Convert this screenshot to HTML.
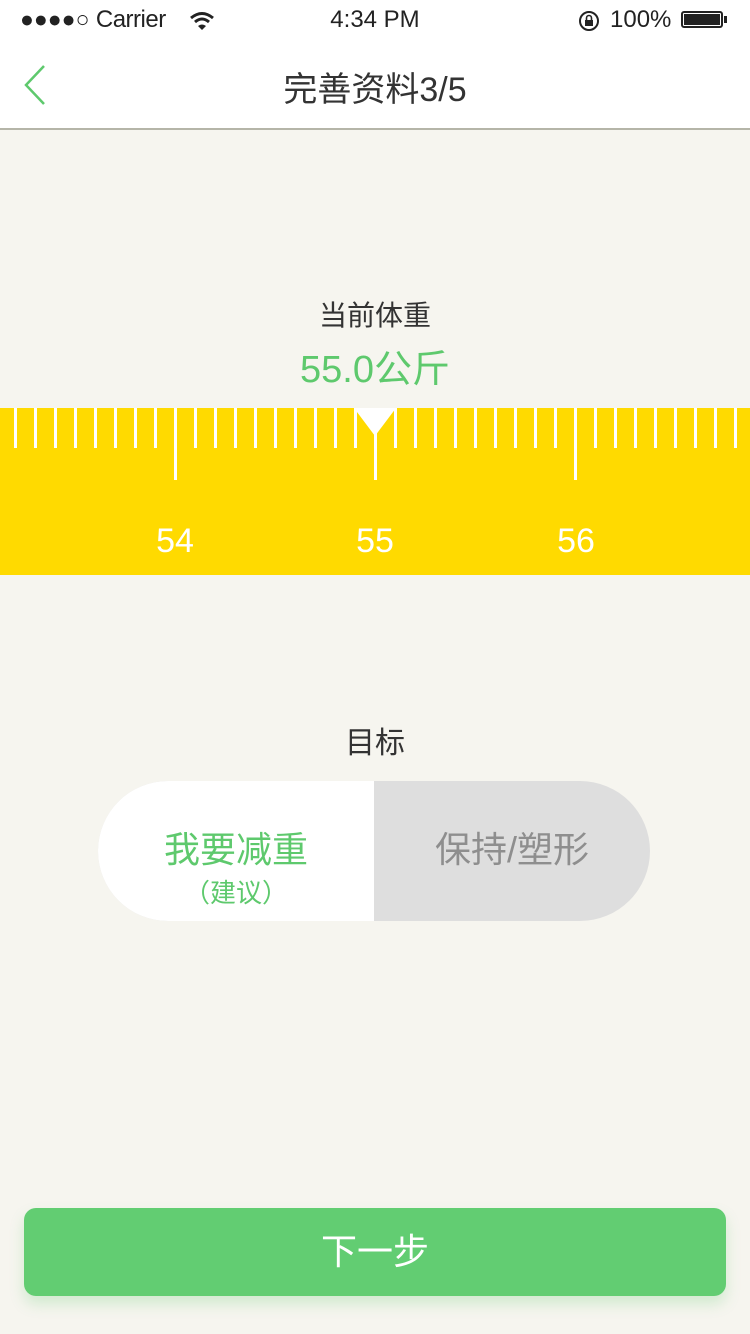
<!DOCTYPE html>
<html><head><meta charset="utf-8"><style>
body{margin:0;width:750px;height:1334px;background:#f6f5ef;font-family:"Liberation Sans","Noto Sans CJK SC",sans-serif;position:relative;overflow:hidden}
.hdr{position:absolute;left:0;top:0;width:750px;height:128px;background:#fff;border-bottom:2px solid #b5b5a8}
.abs{position:absolute}
.ruler{position:absolute;left:0;top:408px;width:750px;height:167px;background:#ffda00}
.t{position:absolute;top:0;width:3px;height:40px;background:#fff}
.t.m{height:72px}
.num{position:absolute;top:114px;width:80px;text-align:center;color:#fff;font-size:34px}
</style></head><body>
<div class="hdr">
<div class="abs" style="left:20px;top:6px;font-size:23px;color:#222">●●●●○ <span style="font-size:24px;letter-spacing:-0.5px">Carrier</span></div>
<svg class="abs" style="left:188px;top:10px" width="28" height="22" viewBox="0 0 28 22"><path d="M3 8 Q14 -1 25 8" stroke="#222" stroke-width="3" fill="none"/><path d="M7 12 Q14 6 21 12" stroke="#222" stroke-width="3" fill="none"/><path d="M10 16 L14 20 L18 16 Q14 13 10 16Z" fill="#222"/></svg>
<div class="abs" style="left:0;width:750px;top:6px;text-align:center;font-size:24px;color:#222">4:34 PM</div>
<svg class="abs" style="left:578px;top:10px" width="22" height="22" viewBox="0 0 22 22"><circle cx="11" cy="11" r="9" stroke="#222" stroke-width="2" fill="none"/><rect x="7" y="10" width="8" height="6" fill="#222"/><path d="M8.5 10V8a2.5 2.5 0 0 1 5 0v2" stroke="#222" stroke-width="1.6" fill="none"/></svg>
<div class="abs" style="left:610px;top:6px;font-size:24px;color:#222">100%</div>
<div class="abs" style="left:681px;top:11px;width:42px;height:17px;border:2px solid #222;border-radius:3px;box-sizing:border-box;padding:1px"><div style="background:#222;width:100%;height:100%"></div></div>
<div class="abs" style="left:724px;top:16px;width:3px;height:7px;background:#222"></div>
<svg class="abs" style="left:22px;top:64px" width="26" height="42" viewBox="0 0 26 42"><path d="M22 2 L4 21 L22 40" stroke="#5ec96d" stroke-width="2.5" fill="none"/></svg>
<div class="abs" style="left:0;width:750px;top:62px;text-align:center;font-size:34px;color:#333">完善资料3/5</div>
</div>
<div class="abs" style="left:0;width:750px;top:294px;text-align:center;font-size:28px;color:#333">当前体重</div>
<div class="abs" style="left:0;width:750px;top:338px;text-align:center;font-size:38px;color:#5ec96d">55.0公斤</div>
<div class="ruler" id="r">
<div class="num" style="left:135px">54</div><div class="num" style="left:335px">55</div><div class="num" style="left:536px">56</div>
<svg class="abs" style="left:354px;top:0" width="42" height="30"><path d="M0 0 H42 L21 28Z" fill="#fff"/></svg>
</div>
<script>
var r=document.getElementById('r');
for(var x=14;x<750;x+=20){var d=document.createElement('div');d.className='t'+((x-174)%200==0?' m':'');d.style.left=x+'px';r.appendChild(d);}
</script>
<div class="abs" style="left:0;width:750px;top:718px;text-align:center;font-size:30px;color:#333">目标</div>
<div class="abs" style="left:98px;top:781px;width:552px;height:140px;border-radius:70px;overflow:hidden;background:#dedede">
<div class="abs" style="left:0;top:0;width:276px;height:140px;background:#fff"></div>
<div class="abs" style="left:0;width:276px;top:48px;text-align:center;color:#5ec96d;font-size:36px;line-height:42px">我要减重</div>
<div class="abs" style="left:0;width:276px;top:92px;text-align:center;color:#5ec96d;font-size:26px">（建议）</div>
<div class="abs" style="left:276px;width:276px;top:48px;text-align:center;color:#8e8e8e;font-size:36px;line-height:42px">保持/塑形</div>
</div>
<div class="abs" style="left:24px;top:1208px;width:702px;height:88px;background:#62cd72;border-radius:12px;box-shadow:0 8px 14px rgba(98,205,114,0.25);color:#fff;font-size:36px;text-align:center;line-height:88px">下一步</div>
</body></html>
